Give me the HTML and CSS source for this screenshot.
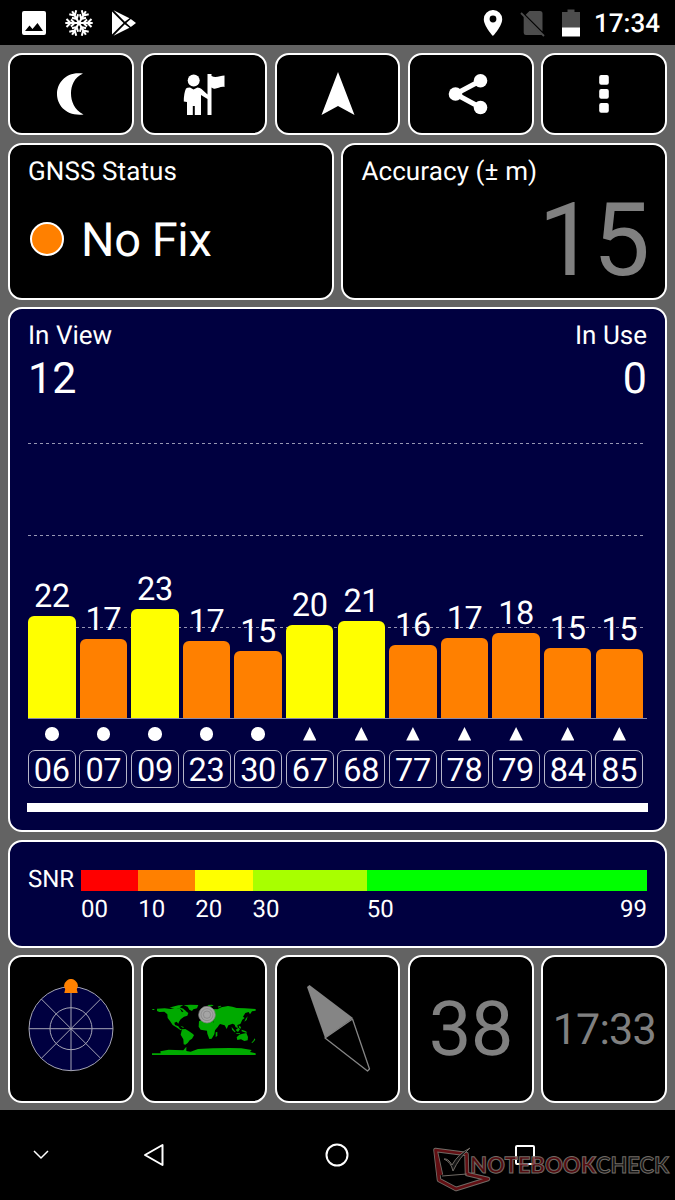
FILE: index.html
```html
<!DOCTYPE html>
<html lang="en">
<head>
<meta charset="utf-8">
<title>GNSS Status</title>
<link rel="stylesheet" href="styles.css">
</head>
<body>
<header class="statusbar">
  <div class="status-left">
    <svg width="26" height="26" viewBox="0 0 26 26"><path fill="#fff" fill-rule="evenodd" d="M3 1H23Q25 1 25 3V23Q25 25 23 25H3Q1 25 1 23V3Q1 1 3 1ZM4 21H22L16.500 13L11.500 19L8.500 15.500Z"/></svg>
    <svg width="28" height="28" viewBox="-14 -14 28 28" fill="none" stroke="#fff" stroke-width="2"><g transform="rotate(30)"><path id="arm" d="M0 0V-13.700M-4 -12.500L0 -8.500L4 -12.500M-3.500 -8L0 -4.500L3.500 -8"/><use href="#arm" transform="rotate(60)"/><use href="#arm" transform="rotate(120)"/><use href="#arm" transform="rotate(180)"/><use href="#arm" transform="rotate(240)"/><use href="#arm" transform="rotate(300)"/></g></svg>
    <svg width="26" height="28" viewBox="0 0 26 28"><path fill="#fff" d="M1 2.500L12.500 14L1 25.500ZM2.500 1.200L18.500 9.300L13.800 12.700ZM2.500 26.800L18.500 18.700L13.800 15.300ZM19.800 9.900L25 14L19.800 18L15.300 14Z"/></svg>
  </div>
  <div class="status-right">
    <svg class="pin" width="20" height="28" viewBox="0 0 20 28"><path fill="#fff" fill-rule="evenodd" d="M10 1A9 9 0 0 0 .8 10.200C.8 17 10 27 10 27S19.200 17 19.200 10.200A9 9 0 0 0 10 1ZM10 6.600A3.400 3.400 0 1 1 10 13.400A3.400 3.400 0 1 1 10 6.600Z"/></svg>
    <svg class="sim" width="26" height="28" viewBox="0 0 26 28"><path fill="#4d4d4d" d="M9.500 2H20Q22.500 2 22.500 4.500V22.500L5.700 5.700ZM3.700 7.200L22.500 26H6Q3.700 26 3.700 23.700Z"/><path d="M1 4L24 27" stroke="#4d4d4d" stroke-width="1.800"/></svg>
    <svg class="battery" width="18" height="28" viewBox="0 0 18 28"><path fill="#4d4d4d" d="M5.500 0.500H12.500V3H18V19H0V3H5.500Z"/><path fill="#fff" d="M0 18.500H18V27.500H0Z"/></svg>
    <span class="clock">17:34</span>
  </div>
</header>

<main class="app">
  <nav class="row five tools">
    <button class="card tile"><svg class="moon" width="28" height="46" viewBox="3 0 28 46"><path fill="#fff" d="M30 2.500C13 0 4 12 4 23S13 45.500 30.500 43.500C21 38.500 18 30 18 22.500S21 6.500 30 2.500Z"/></svg></button>
    <button class="card tile"><svg width="42" height="42" viewBox="0 0 42 42"><g fill="#fff"><circle cx="10.700" cy="7.500" r="6"/><path d="M3 15.500Q4 14.500 7 14.500L10.500 16.500L14.500 14.500Q17 14.500 18.500 16L24.500 21.500V1H28.500V3C33 5.500 37 2.500 41.500 2.500V14C36 13 33 18 28.500 14.500V42H24.500V26L18 22V42H11.800V33H9.800V42H4V29L.8 28.500Q.8 20 3 15.500Z"/></g></svg></button>
    <button class="card tile"><svg width="34" height="44" viewBox="0 0 34 44"><path fill="#fff" d="M17 0L33.500 43L17 34L.5 43Z"/></svg></button>
    <button class="card tile"><svg class="share" width="40" height="42" viewBox="0 0 40 42"><g fill="#fff"><circle cx="7.500" cy="21" r="6.800"/><circle cx="32.500" cy="7.700" r="6.800"/><circle cx="32.500" cy="34.500" r="6.800"/></g><path d="M32.500 7.700L7.500 21L32.500 34.500" stroke="#fff" stroke-width="5" fill="none"/></svg></button>
    <button class="card tile"><svg width="10" height="38" viewBox="0 0 10 38"><g fill="#fff"><rect y="0" x=".2" width="9.600" height="9.800" rx="2"/><rect x=".2" y="14" width="9.600" height="9.800" rx="2"/><rect x=".2" y="28" width="9.600" height="9.800" rx="2"/></g></svg></button>
  </nav>

  <div class="row two">
    <section class="card status-card">
      <div class="label">GNSS Status</div>
      <div class="fix"><i class="led"></i><span>No Fix</span></div>
    </section>
    <section class="card status-card">
      <div class="label">Accuracy (± m)</div>
      <div class="accuracy">15</div>
    </section>
  </div>

  <section class="card navy signal">
    <div class="counts">
      <div><div class="label">In View</div><div class="count">12</div></div>
      <div class="right"><div class="label">In Use</div><div class="count">0</div></div>
    </div>
    <div class="chart">
      <svg class="gridlines" width="619" height="320" viewBox="0 0 619 320"><path d="M0 44.500H617M0 136.500H617M0 228.500H617" stroke="#9797b4" stroke-dasharray="3 3"/></svg>
      <div class="bars">
        <div class="col"><span>22</span><i class="bar y" style="height:102px"></i></div>
        <div class="col"><span>17</span><i class="bar o" style="height:79.500px"></i></div>
        <div class="col"><span>23</span><i class="bar y" style="height:109px"></i></div>
        <div class="col"><span>17</span><i class="bar o" style="height:77px"></i></div>
        <div class="col"><span>15</span><i class="bar o" style="height:67.500px"></i></div>
        <div class="col"><span>20</span><i class="bar y" style="height:93px"></i></div>
        <div class="col"><span>21</span><i class="bar y" style="height:97.500px"></i></div>
        <div class="col"><span>16</span><i class="bar o" style="height:73.500px"></i></div>
        <div class="col"><span>17</span><i class="bar o" style="height:80px"></i></div>
        <div class="col"><span>18</span><i class="bar o" style="height:85px"></i></div>
        <div class="col"><span>15</span><i class="bar o" style="height:70.500px"></i></div>
        <div class="col"><span>15</span><i class="bar o" style="height:69px"></i></div>
      </div>
    </div>
    <div class="sats">
      <div class="sat"><i class="dot"></i><b>06</b></div>
      <div class="sat"><i class="dot"></i><b>07</b></div>
      <div class="sat"><i class="dot"></i><b>09</b></div>
      <div class="sat"><i class="dot"></i><b>23</b></div>
      <div class="sat"><i class="dot"></i><b>30</b></div>
      <div class="sat"><i class="tri"></i><b>67</b></div>
      <div class="sat"><i class="tri"></i><b>68</b></div>
      <div class="sat"><i class="tri"></i><b>77</b></div>
      <div class="sat"><i class="tri"></i><b>78</b></div>
      <div class="sat"><i class="tri"></i><b>79</b></div>
      <div class="sat"><i class="tri"></i><b>84</b></div>
      <div class="sat"><i class="tri"></i><b>85</b></div>
    </div>
    <div class="pager"></div>
  </section>

  <section class="card navy snr">
    <div class="snr-label">SNR</div>
    <div class="scale">
      <div class="band red"><span>00</span></div>
      <div class="band orange"><span>10</span></div>
      <div class="band yellow"><span>20</span></div>
      <div class="band lime"><span>30</span></div>
      <div class="band green"><span>50</span><span>99</span></div>
    </div>
  </section>

  <nav class="row five pages">
    <div class="card tile"><svg width="90" height="100" viewBox="0 4.300 90 100"><circle cx="45" cy="54" r="42" fill="#000040" stroke="#a5a5b5"/><g stroke="#a5a5b5" fill="none"><circle cx="45" cy="54" r="21"/><path d="M3 54H87M45 12V96M15.300 24.300L74.700 83.700M74.700 24.300L15.300 83.700"/></g><path fill="#ff8000" d="M38.300 18.200L39.200 14.500A6.700 6.700 0 1 1 50.800 14.500L51.700 18.200Z"/></svg></div>
    <div class="card tile"><svg width="120" height="70" viewBox="-2 -3 360 210"><g fill="#00aa00"><path d="M37 41L60 40L78 42L92 38L106 41L112 52L120 46L131 54L128 62L118 65L108 73L103 80L101 86L96 80L89 83L91 90L101 94L106 101L112 103L108 106L95 97L84 90L76 78L69 69L68 58L59 50L44 51L37 48Z"/><path d="M74 38L84 35L101 31L116 30L105 37L116 41L124 49L116 49L108 42L96 40ZM117 31L137 29L161 30L157 40L146 43L142 48L134 44L129 35ZM23 42H29V45H23ZM107 92L119 97L114 98Z"/><path d="M112 103L122 102L132 108L145 117L148 121L142 131L135 136L129 144L122 149L117 148L116 133L108 119Z"/><path d="M163 79L171 75L188 76L205 78L211 91L221 94L211 106L209 118L201 131L194 132L188 116L187 107L168 104L162 95Z"/><path d="M165 71L169 65L168 56L174 58L180 53L177 45L188 38L205 42L218 43L230 37L250 33L263 35L276 39L300 40L333 42V47L322 49L316 58L312 51L302 54L295 65L300 69L293 74L287 87L278 90L280 99L273 97L270 89L264 86L251 91L246 102L240 91L226 87L218 97L208 91L207 82L204 75L193 73L188 69L181 73L174 69ZM188 30L202 29L207 32L194 35ZM219 35L227 32L230 34L222 38ZM213 112L218 111L218 123L213 126ZM169 52L173 54L171 61L168 60Z"/><path d="M261 96L268 104L273 111L270 112L262 104ZM273 105L281 98L286 103L280 111ZM291 104L302 108L308 112L304 113L291 109ZM275 114L286 115V117L275 116ZM282 91L289 96L288 101L283 98ZM276 127L284 119L294 116L305 114L310 126L309 136L299 138L289 133L278 135ZM329 130L332 134L324 143L320 143L327 136ZM303 71L309 64L306 75L299 80Z"/><path d="M22 180V175H48L47 169L72 164L92 165L116 166L125 155V168L138 170L160 162L205 160L255 159L290 160L321 165L316 171L333 175V180Z"/></g><g fill="#a5a5a5" stroke="#7e7e7e" stroke-width="2"><circle cx="187" cy="59" r="25"/><circle cx="187" cy="59" r="18"/><circle cx="187" cy="59" r="11"/></g></svg></div>
    <div class="card tile"><svg width="70" height="94" viewBox="0 0 70 94"><path fill="#858585" d="M4 5L6.500 3L50 36L22 56Z"/><path fill="none" stroke="#858585" stroke-width="1.300" stroke-linejoin="round" d="M49.500 37L66.500 87L64.500 89L22 56Z"/></svg></div>
    <div class="card tile"><span class="gray big">38</span></div>
    <div class="card tile"><span class="gray time">17:33</span></div>
  </nav>
</main>

<footer class="navbar">
  <svg class="chevron" width="16" height="10" viewBox="0 0 16 10"><path d="M1 1L8 8L15 1" fill="none" stroke="#fff" stroke-width="1.500"/></svg>
  <svg class="back" width="22" height="24" viewBox="0 0 22 24"><path d="M19.500 2V22L2 12Z" fill="none" stroke="#fff" stroke-width="2" stroke-linejoin="round"/></svg>
  <svg class="home" width="24" height="24" viewBox="0 0 24 24"><circle cx="12" cy="12" r="10.500" fill="none" stroke="#fff" stroke-width="2"/></svg>
  <svg class="recent" width="22" height="22" viewBox="0 0 22 22"><rect x="2" y="2" width="18" height="18" rx="1" fill="none" stroke="#fff" stroke-width="2"/></svg>
  <svg class="watermark" width="250" height="70" viewBox="0 0 250 70">
    <g fill="none" stroke-linejoin="round"><path d="M16 45L10.500 20L41.500 24L42 44L63 49L31 59L14 50L10.500 20" stroke="#77716b" stroke-width="4.500"/><path d="M16 45L10.500 20L41.500 24L42 44L63 49L31 59L14 50L10.500 20" stroke="#681015" stroke-width="2.700"/><path d="M17 46L42 44" stroke="#77716b"/></g>
    <path d="M19 29Q23 28 27 35Q33 24 45 18Q34 28 28 41Q26 32 19 29Z" fill="#171717" stroke="#77716b"/>
    <g class="wm-text"><text x="45" y="42.500" textLength="126" lengthAdjust="spacingAndGlyphs" class="red-word">NOTEBOOK</text><text x="171" y="42.500" textLength="73" lengthAdjust="spacingAndGlyphs" class="dark-word">CHECK</text></g>
  </svg>
</footer>
</body>
</html>
```
FILE: styles.css
```css
* { box-sizing: border-box; }
body { margin: 0; width: 675px; height: 1200px; overflow: hidden; background: #000; color: #fff; font-family: Roboto, sans-serif; text-rendering: geometricPrecision; display: flex; flex-direction: column; }
svg { display: block; flex: none; }
i, b { font-style: normal; font-weight: 400; }

.statusbar { height: 45px; display: flex; justify-content: space-between; align-items: center; padding: 0 15px 0 21px; }
.status-left { display: flex; align-items: center; gap: 18px; }
.status-right { display: flex; align-items: center; }
.sim { margin-left: 17px; }
.battery { margin-left: 16px; }
.clock { font-size: 26px; font-weight: 500; line-height: 30px; margin-left: 14px; padding-top: 2px; }

.app { height: 1065px; background: #636363; padding: 7.5px 8px 0; display: flex; flex-direction: column; gap: 7.5px; }
.row { display: grid; gap: 7.8px; }
.five { grid-template-columns: repeat(5, 1fr); }
.two { grid-template-columns: 1fr 1fr; }
.card { background: #000; border: 2px solid #fff; border-radius: 14px; color: #fff; min-width: 0; }
.navy { background: #000040; }
.tile { display: flex; align-items: center; justify-content: center; padding: 0; }
.tools .tile { height: 82.5px; }
.pages .tile { height: 148px; }
.share { margin-left: -5px; }
.moon { margin-left: -2px; }
.label { font-size: 26px; line-height: 30px; }

.status-card { height: 157px; padding: 12px 18px 0 18px; }
.status-card .label { letter-spacing: 0.1px; }
.fix { display: flex; align-items: center; gap: 17px; margin-top: 26px; padding-left: 2px; font-size: 47px; line-height: 56px; letter-spacing: -0.4px; }
.led { width: 34px; height: 34px; border-radius: 50%; border: 2px solid #fff; background: #ff8000; margin-bottom: 4px; }
.accuracy { text-align: right; font-size: 102px; line-height: 120px; letter-spacing: -3px; color: #808080; margin-top: -7px; }

.signal { height: 525px; padding: 12px 18px 0 18px; }
.counts { display: flex; justify-content: space-between; }
.right { text-align: right; }
.count { font-size: 43px; line-height: 50px; margin-top: 3px; }
.chart { height: 315px; border-bottom: 1px solid #8888a8; position: relative; }
.gridlines { position: absolute; left: 0; top: -5px; }
.bars { position: relative; height: 100%; display: flex; gap: 4.1px; align-items: flex-end; }
.col { width: 47.5px; flex: none; display: flex; flex-direction: column; align-items: center; }
.col span { font-size: 32.5px; line-height: 38px; margin-bottom: 1px; letter-spacing: -0.4px; }
.bar { width: 100%; border-radius: 6px 6px 0 0; }
.y { background: #ff0; }
.o { background: #ff8000; }
.sats { display: flex; gap: 4.1px; padding-top: 8px; }
.sat { width: 47.5px; flex: none; display: flex; flex-direction: column; align-items: center; gap: 9px; }
.dot { width: 13.5px; height: 13.5px; border-radius: 50%; background: #fff; }
.tri { width: 13.5px; height: 13.5px; background: #fff; clip-path: polygon(50% 0, 100% 100%, 0 100%); }
.sat b { width: 48px; height: 38px; border: 1.4px solid #b5b5c8; border-radius: 7px; text-align: center; font-size: 32.5px; line-height: 38px; letter-spacing: -0.3px; }
.pager { height: 9px; background: #fff; margin: 15px -1px 0; }

.snr { height: 108px; padding: 28px 18px 0 18px; display: flex; }
.snr-label { font-size: 24px; line-height: 22px; width: 53px; flex: none; margin-top: -2px; }
.scale { flex: 1; display: grid; grid-template-columns: 10fr 10fr 10fr 20fr 49fr; }
.band { height: 21.5px; font-size: 24px; display: flex; justify-content: space-between; }
.band span { line-height: 28px; padding-top: 25px; }
.red { background: #f00; }
.orange { background: #ff8000; }
.yellow { background: #ff0; }
.lime { background: #a8ff00; }
.green { background: #0f0; }

.gray { color: #808080; }
.big { font-size: 76px; line-height: 90px; letter-spacing: -0.5px; }
.time { font-size: 43px; line-height: 50px; padding-top: 2px; letter-spacing: -0.8px; }

.navbar { height: 90px; position: relative; display: grid; grid-template-columns: 82px 144px 222px 154px 73px; align-items: center; justify-items: center; }
.watermark { position: absolute; right: 0; top: 20px; opacity: .95; }
.wm-text { font-family: Lato, sans-serif; font-weight: 700; font-size: 22.5px; stroke: #77716b; stroke-width: 1; }
.red-word { fill: #681015; font-weight: 900; fill-opacity: .85; }
.dark-word { fill: #151515; }
```
